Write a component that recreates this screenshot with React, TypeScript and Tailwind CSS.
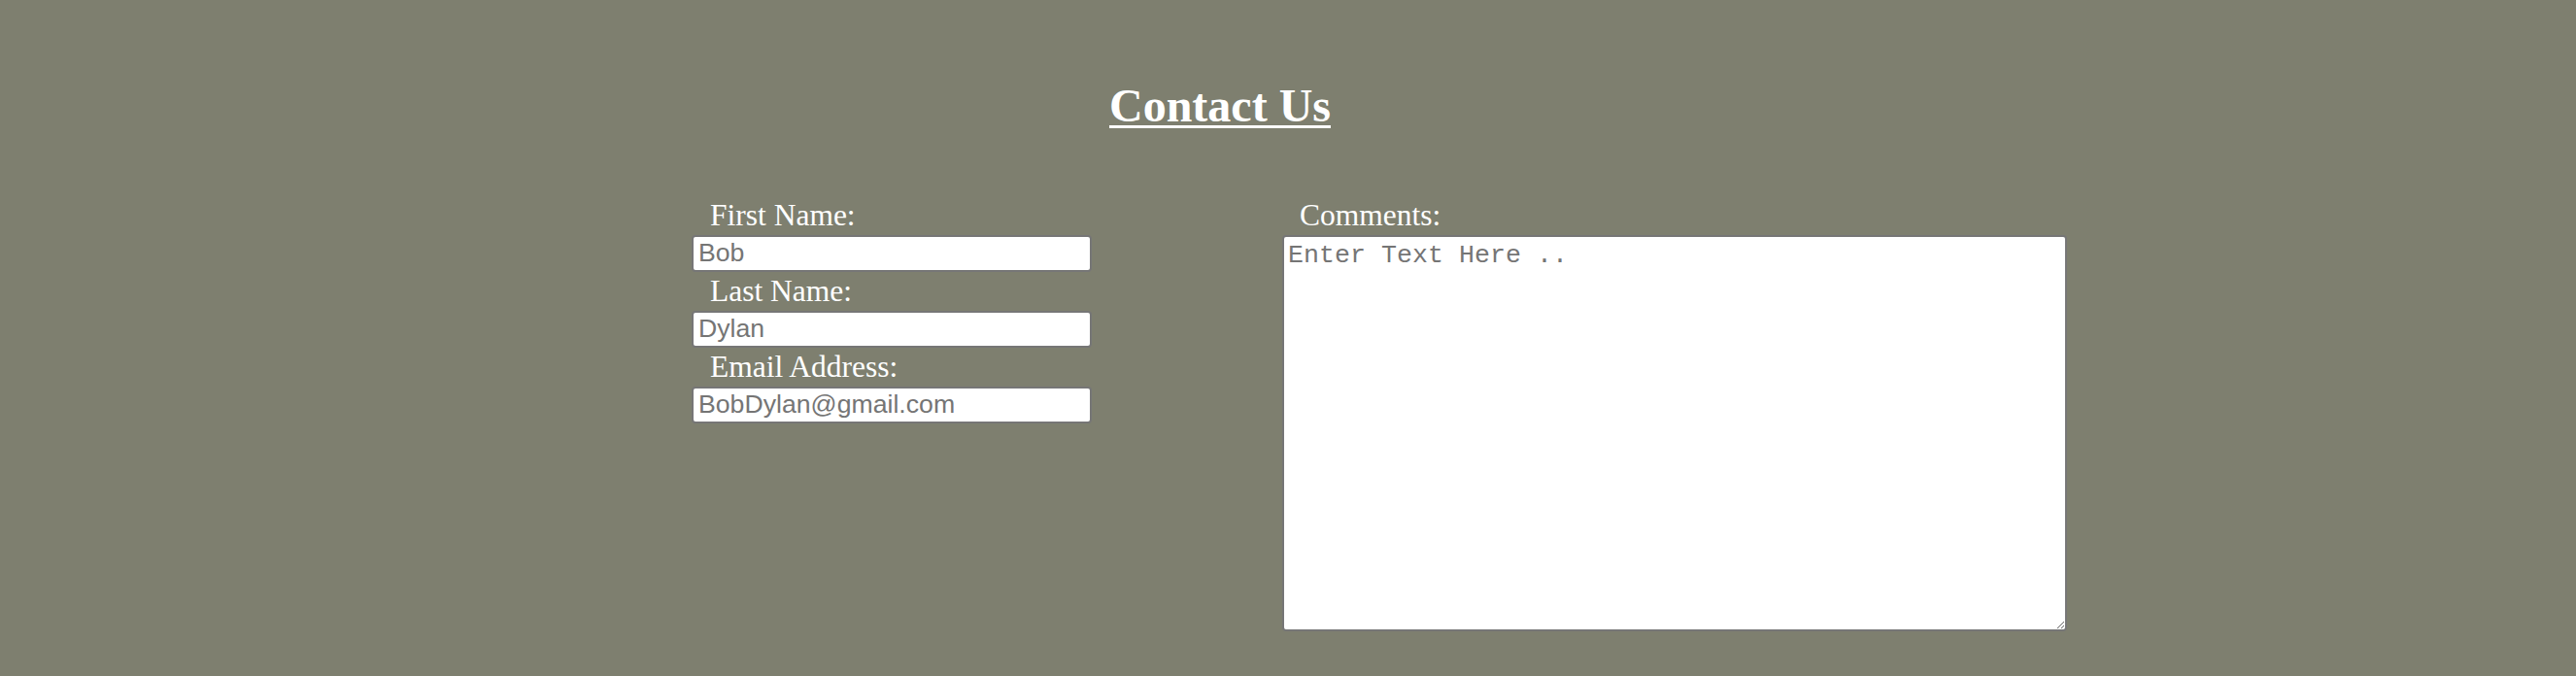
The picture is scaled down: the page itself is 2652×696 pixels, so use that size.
import React from "react";

export default function App() {
  const label =
    "block pl-[19px] font-['Liberation_Serif','Times_New_Roman',serif] text-[31.5px] leading-[39.7px] text-white";
  const input =
    "block h-[38.3px] w-[412px] rounded-[4px] border-2 border-[#767676] bg-white px-[5px] font-['Liberation_Sans',Arial,sans-serif] text-[26.67px] text-[#757575] placeholder:text-[#757575] outline-none";
  return (
    <div className="min-h-[696px] w-full bg-[#7e7f6f] pt-[82px]">
      <h1 className="pr-[140px] text-center font-['Liberation_Serif','Times_New_Roman',serif] text-[48px] font-bold leading-[53px] text-white underline decoration-[3px] underline-offset-[4px]">
        Contact Us
      </h1>
      <div className="mt-[67px] flex pl-[712px]">
        <div className="flex w-[412px] flex-col">
          <label className={label}>First Name:</label>
          <input className={input} placeholder="Bob" />
          <label className={label}>Last Name:</label>
          <input className={input} placeholder="Dylan" />
          <label className={label}>Email Address:</label>
          <input className={input} placeholder="BobDylan@gmail.com" />
        </div>
        <div className="ml-[196px] flex w-[808px] flex-col">
          <label className="block pl-[18px] font-['Liberation_Serif','Times_New_Roman',serif] text-[31.5px] leading-[39.7px] text-white">
            Comments:
          </label>
          <textarea
            className="block h-[408px] w-[808px] resize rounded-[4px] border-2 border-[#767676] bg-white p-[4px] font-['Liberation_Mono','Courier_New',monospace] text-[26.67px] leading-[30px] text-[#757575] placeholder:text-[#757575] outline-none"
            placeholder="Enter Text Here .."
          />
        </div>
      </div>
    </div>
  );
}
